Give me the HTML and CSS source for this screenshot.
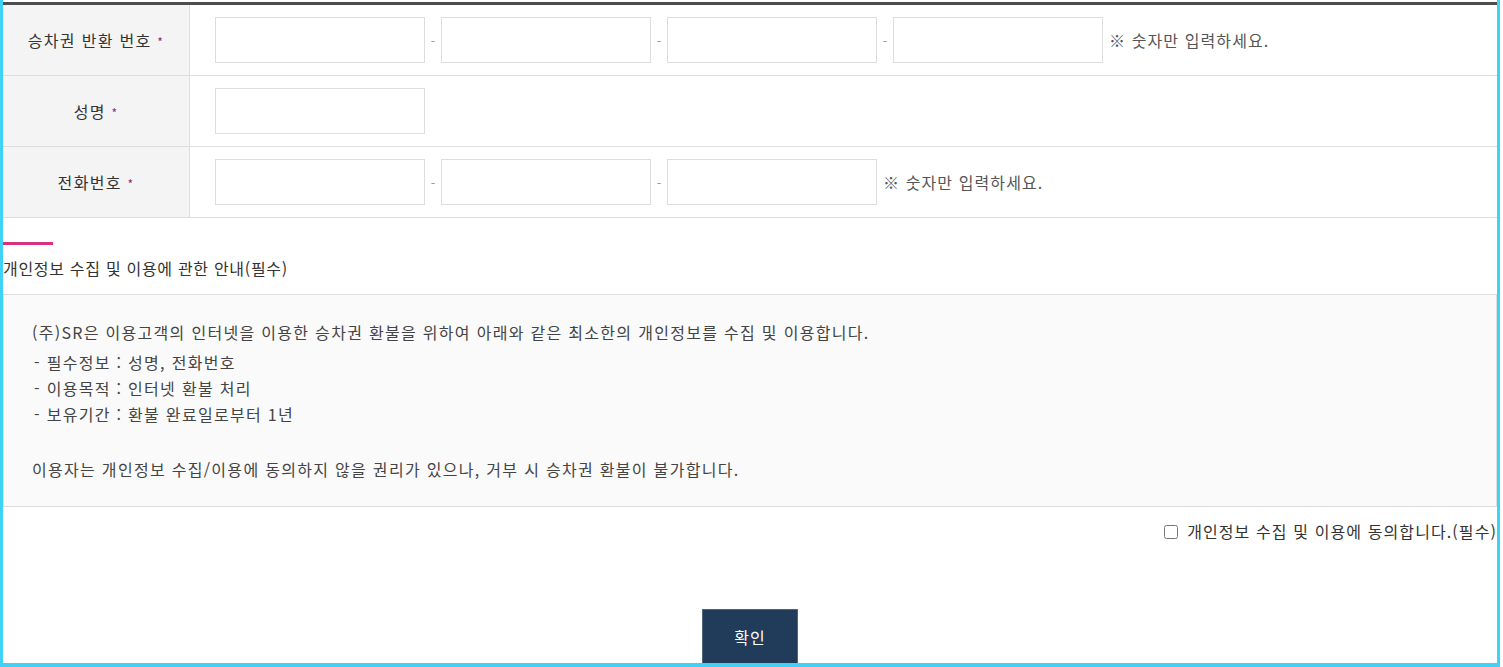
FILE: index.html
```html
<!DOCTYPE html>
<html lang="ko">
<head>
  <meta charset="UTF-8">
  <title>승차권 환불</title>
  <link rel="stylesheet" href="styles.css">
</head>
<body>
  <div class="frame">
    <table class="form-table">
      <tr>
        <th>승차권 반환 번호 <span class="req">*</span></th>
        <td>
          <div class="field-row">
            <input type="text" class="box-input">
            <span class="dash">-</span>
            <input type="text" class="box-input">
            <span class="dash">-</span>
            <input type="text" class="box-input">
            <span class="dash">-</span>
            <input type="text" class="box-input">
            <span class="note">※ 숫자만 입력하세요.</span>
          </div>
        </td>
      </tr>
      <tr>
        <th>성명 <span class="req">*</span></th>
        <td>
          <div class="field-row">
            <input type="text" class="box-input">
          </div>
        </td>
      </tr>
      <tr>
        <th>전화번호 <span class="req">*</span></th>
        <td>
          <div class="field-row">
            <input type="text" class="box-input">
            <span class="dash">-</span>
            <input type="text" class="box-input">
            <span class="dash">-</span>
            <input type="text" class="box-input">
            <span class="note">※ 숫자만 입력하세요.</span>
          </div>
        </td>
      </tr>
    </table>

    <!-- 개인정보 안내 -->
    <div class="privacy">
      <div class="privacy-bar"></div>
      <h3 class="privacy-title">개인정보 수집 및 이용에 관한 안내(필수)</h3>
      <div class="privacy-box">
        <p class="lead">(주)SR은 이용고객의 인터넷을 이용한 승차권 환불을 위하여 아래와 같은 최소한의 개인정보를 수집 및 이용합니다.</p>
        <ul class="terms">
          <li>- 필수정보 : 성명, 전화번호</li>
          <li>- 이용목적 : 인터넷 환불 처리</li>
          <li>- 보유기간 : 환불 완료일로부터 1년</li>
        </ul>
        <p class="notice">이용자는 개인정보 수집/이용에 동의하지 않을 권리가 있으나, 거부 시 승차권 환불이 불가합니다.</p>
      </div>
      <div class="agree">
        <label><input type="checkbox" id="agreeCheck"> 개인정보 수집 및 이용에 동의합니다.(필수)</label>
      </div>
    </div>

    <div class="btn-area">
      <button type="button" class="btn-confirm">확인</button>
    </div>
  </div>
</body>
</html>
```

FILE: styles.css
```css
body {
  margin: 0;
  font-family: "Noto Sans CJK KR", "Noto Sans", sans-serif;
  color: #333;
  background: #fff;
}
.frame {
  width: 1500px;
  height: 667px;
  box-sizing: border-box;
  border-left: 3px solid #3fd2f4;
  border-right: 3px solid #3fd2f4;
  border-bottom: 4px solid #3fd2f4;
  padding-top: 2px;
  overflow: hidden;
}
.form-table {
  width: 100%;
  border-collapse: collapse;
  border-top: 3px solid #4d4d4d;
}
.form-table th,
.form-table td {
  height: 70px;
  padding: 0;
  border-bottom: 1px solid #ddd;
}
.form-table th {
  width: 186px;
  background: #f4f4f4;
  border-right: 1px solid #ddd;
  font-size: 16px;
  letter-spacing: 1.3px;
  font-weight: normal;
  color: #333;
  text-align: center;
}
.req {
  color: #7d2f80;
  font-size: 12px;
}
.form-table td {
  padding-left: 25px;
}
.field-row {
  display: flex;
  align-items: center;
}
.box-input {
  width: 210px;
  height: 46px;
  box-sizing: border-box;
  border: 1px solid #ddd;
  margin: 0;
  padding: 0 8px;
  font-size: 14px;
}
.dash {
  width: 16px;
  text-align: center;
  color: #999;
  font-size: 13px;
}
.note {
  margin-left: 6px;
  font-size: 16px;
  letter-spacing: 1.1px;
  color: #555;
}
/* 개인정보 안내 */
.privacy {
  margin-top: 24px;
}
.privacy-bar {
  width: 50px;
  height: 3px;
  background: #d6327d;
}
.privacy-title {
  margin: 0;
  height: 46px;
  padding-bottom: 3px;
  line-height: 46px;
  font-size: 16px;
  letter-spacing: 0.7px;
  font-weight: normal;
  color: #333;
}
.privacy-box {
  border: 1px solid #ddd;
  background: #fafafa;
  padding: 24px 28px 24px;
  font-size: 16px;
  letter-spacing: 1.3px;
  color: #444;
  height: 213px;
  box-sizing: border-box;
}
.privacy-box p {
  margin: 0;
  line-height: 26px;
}
.terms {
  list-style: none;
  margin: 4px 0 29px;
  padding: 0 0 0 2px;
}
.terms li {
  line-height: 26px;
}
.agree {
  text-align: right;
  padding-top: 12px;
  font-size: 16px;
  letter-spacing: 1.1px;
  color: #333;
}
.agree input {
  width: 14px;
  height: 14px;
  margin: 0 4px 0 0;
  vertical-align: -1px;
}
.btn-area {
  text-align: center;
  padding-top: 66px;
}
.btn-confirm {
  width: 96px;
  height: 56px;
  background: #213b5a;
  color: #fff;
  border: 1px solid #4f6680;
  font-family: inherit;
  font-size: 16px;
  letter-spacing: 1px;
  cursor: pointer;
}
```
